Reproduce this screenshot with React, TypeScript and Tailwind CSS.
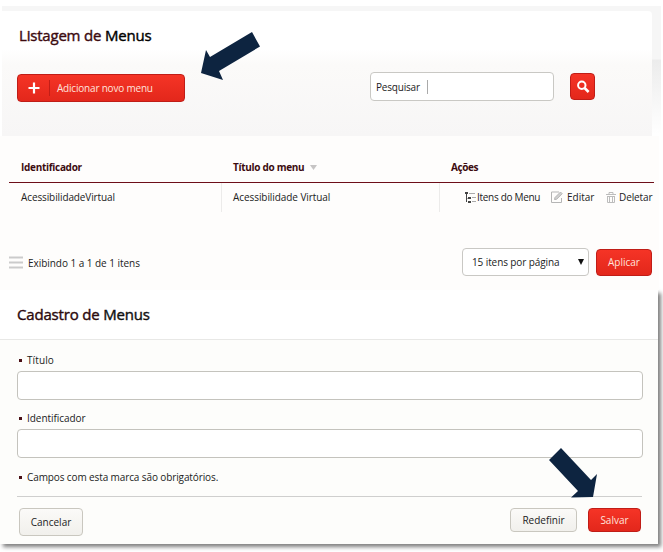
import React from "react";

const redButton =
  "flex shrink-0 items-center rounded-[4px] border border-[#c01d17] bg-linear-to-b from-[#f53426] to-[#e3271b] text-[#ffe3dc]";
const lightButton =
  "flex shrink-0 items-center justify-center rounded-[4px] border border-[#c9c7bf] bg-linear-to-b from-[#fbfaf8] to-[#f1f0ec] text-[#222]";

function Arrow({ points, className }: { points: string; className: string }) {
  return (
    <svg className={`absolute ${className}`} viewBox="0 0 60 50" width="60" height="50">
      <polygon points={points} fill="#0d2440" />
    </svg>
  );
}

function TreeIcon() {
  return (
    <svg width="11" height="11" viewBox="0 0 11 11" shapeRendering="crispEdges">
      <path d="M0 0h3v2H0zM1 2h1v8H1zM3 5h3v2H3zM3 9h3v2H3z" fill="#444" />
      <path d="M4 1h6v1H4zM7 5h4v1H7zM7 9h4v1H7zM2 6h1v1H2z" fill="#aaa" />
    </svg>
  );
}

function EditIcon() {
  return (
    <svg width="12" height="12" viewBox="0 0 12 12" fill="none" stroke="#b5b5b5">
      <path d="M8 1H.5v10.5H10.5V7" />
      <path d="M3.5 8.5 4 6.5 9.5 1l1.7 1.7-5.6 5.6z" fill="#d0d0d0" />
    </svg>
  );
}

function TrashIcon() {
  return (
    <svg width="10" height="11" viewBox="0 0 10 11" fill="none" stroke="#bcbcbc">
      <path d="M0 2.5h10M3 2V.5h4V2M1 4.5h8M1.5 4.5v6h7v-6M3.5 5v5M6.5 5v5" />
    </svg>
  );
}

function Field({ label, spacing }: { label: string; spacing: string }) {
  return (
    <div>
      <label className="flex h-[22px] items-center gap-[5px] pl-[2px]">
        <span className="mt-px size-[3px] bg-[#4a1016]" />
        <span className={spacing}>{label}</span>
      </label>
      <input className="block h-[29px] w-[626px] rounded-[4px] border border-[#c4c3bd] bg-white px-2 outline-none" />
    </div>
  );
}

export default function App() {
  return (
    <div className="relative h-[552px] w-[663px] overflow-hidden bg-white font-['Open_Sans','Noto_Sans',sans-serif] text-[10px] leading-[14px] text-[#222]">
      <section className="flex h-[290px] flex-col pt-[6px]">
        <header className="ml-[2px] flex h-[130px] w-[659px] flex-col bg-[linear-gradient(#f6f6f6_0,#f6f6f6_53px,#ececec_54px,#ffffff_128px)]">
          <div className="mt-[5px] h-[125px] w-[650px] rounded-tr-[4px] bg-[linear-gradient(#ffffff_38px,#fbfaf9_54px,#f7f6f6_125px)]">
            <h1 className="flex h-[49px] items-center pb-px pl-[17px] text-[15px] tracking-[-0.2px] text-black [-webkit-text-stroke:0.4px_currentColor]">
              <span><span className="text-[#3c0b10]">Listagem de</span> Menus</span>
            </h1>
            <div className="flex h-[41px] items-center pt-[12px] pl-[15px]">
              <button className={`${redButton} mt-[2px] h-[28px] w-[168px]`}>
                <svg className="ml-[10px]" width="12" height="12" viewBox="0 0 12 12"><path d="M6 .5v11M.5 6h11" stroke="white" strokeWidth="2.2" /></svg>
                <span className="ml-[9px] h-4 w-px bg-[#c21e17]" />
                <span className="ml-[7px] tracking-[-0.2px] whitespace-nowrap">Adicionar novo menu</span>
              </button>
              <div className="ml-[185px] flex h-[29px] w-[184px] items-center rounded-[4px] border border-[#c9c8c4] bg-white pl-[5px] text-[#222]">
                <span className="w-[43px] tracking-[-0.2px]">Pesquisar</span>
                <span className="ml-[8px] h-[14px] w-px bg-[#aaa]" />
              </div>
              <button className={`${redButton} ml-[16px] h-[27px] w-[25px] justify-center`}>
                <svg width="14" height="14" viewBox="0 0 14 14" fill="none" stroke="white"><circle cx="5.8" cy="5.2" r="3.7" strokeWidth="2" /><path d="m8.6 8 4 4" strokeWidth="2.5" /></svg>
              </button>
            </div>
          </div>
        </header>
        <div className="w-[659px] flex-1 bg-[#fefdfc] pt-[19px]">
          <div className="ml-[9px] grid h-[28px] w-[645px] grid-cols-[212px_218px_1fr] items-center border-b border-[#6d0e19] font-bold text-[#3c0b10]">
            <span className="pb-[3px] pl-[12px] tracking-[-0.3px]">Identificador</span>
            <span className="flex items-center gap-[6px] pb-[3px] pl-[12px] tracking-[-0.3px]">
              Título do menu
              <svg width="7" height="5" viewBox="0 0 7 5"><path d="M0 0h7L3.5 5z" fill="#c6c4c4" /></svg>
            </span>
            <span className="pb-[3px] pl-[12px] tracking-[-0.4px]">Ações</span>
          </div>
          <div className="ml-[9px] grid h-[29px] w-[645px] grid-cols-[212px_218px_1fr] items-center">
            <span className="pb-px pl-[12px] tracking-[-0.11px]">AcessibilidadeVirtual</span>
            <span className="flex h-full items-center border-l border-[#ecebea] pb-px pl-[11px] tracking-[-0.07px]">Acessibilidade Virtual</span>
            <span className="flex h-full items-center border-l border-[#ecebea] pb-px pl-[25px] whitespace-nowrap">
              <TreeIcon /><span className="ml-px w-[64px] tracking-[-0.3px]">Itens do Menu</span>
              <span className="ml-[10px]"><EditIcon /></span><span className="ml-[4px] w-[28px]">Editar</span>
              <span className="ml-[11px]"><TrashIcon /></span><span className="ml-[3px] tracking-[-0.1px]">Deletar</span>
            </span>
          </div>
          <div className="mt-[36px] flex h-[28px] items-center pl-[9px]">
            <svg width="14" height="13" viewBox="0 0 14 13"><path d="M0 1.5h14M0 6.5h14M0 11.5h14" stroke="#cbcbcb" strokeWidth="2" /></svg>
            <span className="ml-[5px] w-[434px] pt-[2px] tracking-[-0.04px]">Exibindo 1 a 1 de 1 itens</span>
            <button className="flex h-[28px] w-[127px] items-center justify-between rounded-[4px] border border-[#c9c8c4] bg-white pr-[4px] pl-[9px] whitespace-nowrap">
              <span className="tracking-[-0.1px]">15 itens por página</span>
              <svg width="6" height="6" viewBox="0 0 6 6"><path d="M0 0h6L3 6z" fill="#111" /></svg>
            </button>
            <button className={`${redButton} ml-[7px] h-[27px] w-[56px] justify-center`}>Aplicar</button>
          </div>
        </div>
      </section>

      <section className="h-[254px] w-[658px] bg-[#fdfdfb] shadow-[3px_3px_4px_rgba(0,0,0,0.5)]">
        <h2 className="flex h-[50px] items-center border-b border-[#e8e8e6] bg-white pb-[2px] pl-[17px] text-[15px] tracking-[-0.18px] text-[#111] [-webkit-text-stroke:0.4px_currentColor]">
          <span><span className="text-[#2c0a0d]">Cadastro de</span> Menus</span>
        </h2>
        <div className="flex flex-col gap-[7px] pt-[9px] pl-[17px]">
          <Field label="Título" spacing="tracking-[0.1px]" />
          <Field label="Identificador" spacing="tracking-[-0.05px]" />
        </div>
        <div className="mt-[9px] flex h-[20px] items-center gap-[5px] pl-[19px]">
          <span className="mt-px size-[3px] bg-[#4a1016]" />
          <span className="tracking-[-0.11px]">Campos com esta marca são obrigatórios.</span>
        </div>
        <div className="mt-[9px] ml-[17px] flex w-[625px] items-start border-t border-[#cfcfce] pt-[11px] pl-[2px]">
          <button className={`${lightButton} h-[28px] w-[64px]`}>Cancelar</button>
          <button className={`${lightButton} ml-[427px] h-[24px] w-[67px]`}>Redefinir</button>
          <button className={`${redButton} ml-[11px] h-[24px] w-[53px] justify-center`}>Salvar</button>
        </div>
      </section>

      <Arrow className="top-[32px] left-[201px]" points="51,0 59,14.5 18,39 22,48 0,41 5,18 9,25" />
      <Arrow className="top-[448px] left-[549px]" points="0,12 12,0 42,32 48,26 44,49 22,49.5 29,43" />
    </div>
  );
}
